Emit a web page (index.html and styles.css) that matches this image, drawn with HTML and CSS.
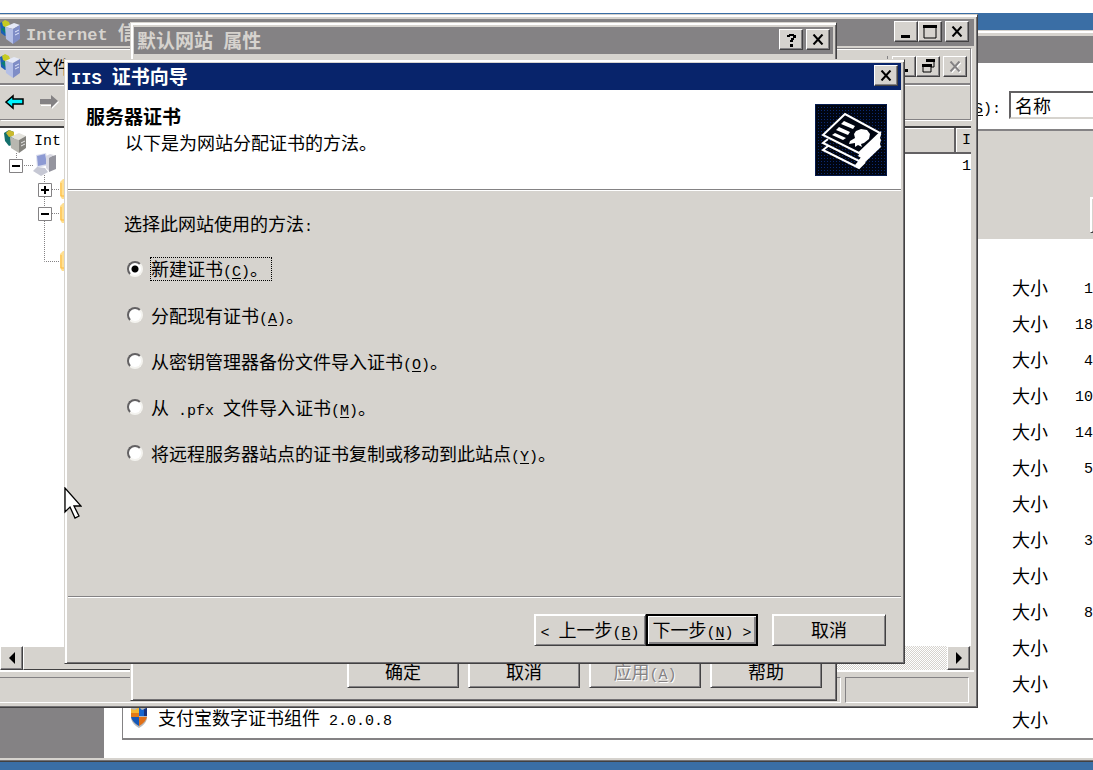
FILE: index.html
```
<!DOCTYPE html>
<html lang="zh-CN">
<head>
	<meta charset="utf-8"/>
	<title>IIS 证书向导</title>
	<link rel="stylesheet" href="styles.css">
</head>
<body>
<svg class="defs" width="0" height="0">
	<symbol id="close" viewBox="0 0 12 11"><path d="M1.500 .5L10.500 10.500M10.500 .5L1.500 10.500" fill="none" stroke="currentColor" stroke-width="2"/></symbol>
	<symbol id="server" viewBox="0 0 22 24">
		<path d="M0 3l4-2 5 3v11l-4 1-4-3z" fill="#1b5fb5"/><path d="M2 2l3-2 4 2 1 3-3 3-4-2z" fill="#c6cb20"/><path d="M1 9l4-2 3 4-2 3z" fill="#0c7f72"/>
		<path d="M5 7l9-4 6 2-7 4z" fill="#e5e9f7"/><path d="M5 7l8 2v15l-7-5z" fill="#b4bfe6"/><path d="M13 9l7-4v14l-7 5z" fill="#7f8dc6"/><path d="M15 12l4-2M15 15l4-2" stroke="#dfe5fa"/>
	</symbol>
	<symbol id="server-grey" viewBox="0 0 24 24">
		<path d="M1 4l5-3 5 2v12l-5 2-4-5z" fill="#14706c"/><path d="M3 4l3-3 5 2v4l-5 1z" fill="#c9b92e"/>
		<path d="M7 8l9-4 7 3-7 4z" fill="#e3e2dc"/><path d="M7 8l9 3v13l-8-5z" fill="#b8b7b0"/><path d="M16 11l7-4v12l-7 5z" fill="#84837e"/><path d="M18 14l4-2M18 17l4-2" stroke="#e8e8e8"/>
	</symbol>
</svg>

<div class="desktop">
	<!-- add/remove programs -->
	<section class="window programs">
		<div class="titlebar inactive"></div>
		<div class="programs-main">
			<div class="sidebar"></div>
			<div class="programs-page">
				<div class="sortbar">
					<label for="sort">排序方式<span class="en">(<u>S</u>):</span></label>
					<select id="sort"><option>名称</option></select>
				</div>
				<div class="listbox">
					<div class="current"><button class="btn" aria-label="更改"></button></div>
					<table class="apps">
						<tr><td></td><td class="size">大小</td><td class="num">1</td></tr>
						<tr><td></td><td class="size">大小</td><td class="num">18</td></tr>
						<tr><td></td><td class="size">大小</td><td class="num">4</td></tr>
						<tr><td></td><td class="size">大小</td><td class="num">10</td></tr>
						<tr><td></td><td class="size">大小</td><td class="num">14</td></tr>
						<tr><td></td><td class="size">大小</td><td class="num">5</td></tr>
						<tr><td></td><td class="size">大小</td><td class="num"></td></tr>
						<tr><td></td><td class="size">大小</td><td class="num">3</td></tr>
						<tr><td></td><td class="size">大小</td><td class="num"></td></tr>
						<tr><td></td><td class="size">大小</td><td class="num">8</td></tr>
						<tr><td></td><td class="size">大小</td><td class="num"></td></tr>
						<tr><td></td><td class="size">大小</td><td class="num"></td></tr>
						<tr>
							<td><div class="app">
								<svg width="18" height="22" viewBox="0 0 18 22"><path d="M9 0l3 2 5-1v12q-2 6-8 9Q3 19 1 13V1l5 1z" fill="#b9b9b9"/><path d="M9 1v9H1V3l4 1z" fill="#f2b632"/><path d="M1 7h8v4H1z" fill="#e27a16"/><path d="M9 1l3 3 5-2v8H9z" fill="#1766cf"/><path d="M14 3l3-1v8h-3z" fill="#17317c"/><path d="M1 11h8v9q-6-3-8-9z" fill="#1558b7"/><path d="M17 11q-2 6-8 9v-9z" fill="#e06f17"/></svg>
								<span>支付宝数字证书组件<span class="en"> 2.0.0.8</span></span></div></td>
							<td class="size">大小</td><td class="num"></td>
						</tr>
					</table>
				</div>
			</div>
		</div>
	</section>

	<!-- IIS manager -->
	<section class="window manager">
		<div class="titlebar inactive">
			<svg width="22" height="24"><use href="#server"/></svg>
			<h2><span class="en">Internet </span>信</h2>
			<div class="controls">
				<button class="ctl" aria-label="最小化"><svg width="12" height="12"><path d="M1 9h9v3H1z"/></svg></button>
				<button class="ctl" aria-label="最大化"><svg width="14" height="14"><path d="M1 2h12v11H1z" fill="none" stroke="#000"/><path d="M0 0h14v3H0z"/></svg></button>
				<button class="ctl apart" aria-label="关闭"><svg width="12" height="11"><use href="#close"/></svg></button>
			</div>
		</div>
		<div class="menubar">
			<svg width="22" height="24"><use href="#server"/></svg>
			<a href="#">文件</a>
			<div class="controls mdi">
				<button class="ctl" aria-label="最小化"><svg width="12" height="12"><path d="M1 9h9v3H1z"/></svg></button>
				<button class="ctl" aria-label="还原"><svg width="13" height="14"><path d="M4 1h8v7H9M1 6h8v7H1z" fill="none" stroke="#000"/><path d="M4 0h9v3H4zM0 5h10v3H0z"/></svg></button>
				<button class="ctl apart off" aria-label="关闭" disabled><svg width="12" height="11"><use href="#close"/></svg></button>
			</div>
		</div>
		<div class="toolbar">
			<button aria-label="后退"><svg width="20" height="16"><path d="M1 8l7-6v3h10v5H8v4z" fill="#00f3ff" stroke="#000" stroke-width="1.5"/></svg></button>
			<button aria-label="前进"><svg width="20" height="16"><path d="M20 8l-7 7v-3H2v-1h11l6-4z" fill="#fff"/><path d="M19 7l-7-6v4H1v5h11v4z" fill="#848284"/></svg></button>
		</div>
		<div class="panes">
			<div class="tree">
				<div><svg width="30" height="24"><use href="#server-grey" x="3" width="24" height="24"/></svg><span class="en">Int</span></div>
				<svg width="66" height="24"><path d="M16.5 0v5M24 12.500h9M44.500 22v2" stroke="#848284" stroke-dasharray="1 1"/><path d="M9.500 6.500h13v13h-13z" fill="#fff" stroke="#848284"/><path d="M12 12h8v2h-8z"/><path d="M36 2l10-2 3 12-12 3z" fill="#d9dded"/><path d="M37 3l8-2 2 10-9 2z" fill="#8d9ad3"/><path d="M49 4l7-2v14l-7 3z" fill="#94949e"/><path d="M46 3l4-2 4 1-5 3v13l-3-3z" fill="#d8d8e2"/><path d="M33 18l4-4 8 1 3 4-7 4z" fill="#c6c8d4"/></svg>
				<svg width="66" height="24"><path d="M44.500 0v24M52 12.500h9" stroke="#848284" stroke-dasharray="1 1"/><path d="M38.500 6.500h13v13h-13z" fill="#fff" stroke="#848284"/><path d="M41 12h8v2h-8zM44 9h2v8h-2z"/><path d="M60 5l3-3h3v20h-4l-2-3z" fill="#ffdf91"/><path d="M61 6v13h4" stroke="#ffba3d" fill="none"/></svg>
				<svg width="66" height="24"><path d="M44.500 0v24M52 12.500h9" stroke="#848284" stroke-dasharray="1 1"/><path d="M38.500 6.500h13v13h-13z" fill="#fff" stroke="#848284"/><path d="M41 12h8v2h-8z"/><path d="M60 5l3-3h3v20h-4l-2-3z" fill="#ffdf91"/><path d="M61 6v13h4" stroke="#ffba3d" fill="none"/></svg>
				<svg width="66" height="24"><path d="M44.500 0v24" stroke="#848284" stroke-dasharray="1 1"/></svg>
				<svg width="66" height="24"><path d="M44.500 0v12.500h16" fill="none" stroke="#848284" stroke-dasharray="1 1"/><path d="M60 5l3-3h3v20h-4l-2-3z" fill="#ffdf91"/><path d="M61 6v13h4" stroke="#ffba3d" fill="none"/></svg>
			</div>
			<table class="sites">
				<tr><th></th><th class="ip">I</th></tr>
				<tr><td></td><td class="ip">1</td></tr>
			</table>
		</div>
		<div class="scrollbar">
			<button class="ctl" aria-label="向左"><svg width="8" height="12"><path d="M7 0v12L1 6z"/></svg></button>
			<div class="thumb"></div>
			<div class="track"></div>
			<button class="ctl" aria-label="向右"><svg width="8" height="12"><path d="M1 0v12l6-6z"/></svg></button>
		</div>
		<div class="statusbar"><span></span><span></span></div>
	</section>

	<!-- site properties -->
	<section class="window properties">
		<div class="titlebar inactive">
			<h2>默认网站<span class="en"> </span>属性</h2>
			<div class="controls">
				<button class="ctl" aria-label="帮助"><svg width="12" height="14"><path d="M2 4V2h2V1h5v1h2v3H9v2H8v2H5V7h1V5h2V3H5v1zM5 11h3v3H5z"/></svg></button>
				<button class="ctl apart" aria-label="关闭"><svg width="12" height="11"><use href="#close"/></svg></button>
			</div>
		</div>
		<div class="prop-buttons">
			<button class="btn">确定</button>
			<button class="btn">取消</button>
			<button class="btn" disabled>应用<span class="en">(<u>A</u>)</span></button>
			<button class="btn">帮助</button>
		</div>
	</section>

	<!-- wizard -->
	<form class="window wizard">
		<div class="titlebar">
			<h1><span class="en">IIS </span>证书向导</h1>
			<div class="controls"><button type="button" class="ctl" aria-label="关闭"><svg width="12" height="11"><use href="#close"/></svg></button></div>
		</div>
		<div class="wizard-head">
			<div>
				<h2>服务器证书</h2>
				<p>以下是为网站分配证书的方法。</p>
			</div>
			<svg width="72" height="72" viewBox="0 0 72 72">
				<defs><pattern id="mesh" width="3" height="3" patternUnits="userSpaceOnUse"><path d="M0 0h3v3H0z" fill="#000511"/><path d="M0 0h1v1H0z" fill="#0b2a72"/></pattern></defs>
				<path d="M0 0h72v72H0z" fill="url(#mesh)"/><path d="M.5.5h71v71H.5z" fill="none" stroke="#061c50"/>
				<path d="M66 27v4l-1 3 1 2-1 4 1 3-22 21-4-3 6-7-3-2 3-5z" fill="#fff"/>
				<g fill="none" stroke="#fff" stroke-width="2"><path d="M30 10L8 31l36 18 21-20z" fill="#000511"/><path d="M13 35l-5 4 36 18 6-6M13 42l-5 4 36 18 6-6"/></g>
				<path d="M26 20l3-3 11 5-2 3zM21 26l3-3 11 5-2 3zM17 31l3-2 11 5-3 2z" fill="#fff"/>
				<path d="M39 30l2-3 5-2 6 1 3 4-1 5-5 4-3 1 1 3-4-2-3 2v-4l-6 1 1-3 5-3z" fill="#fff"/>
			</svg>
		</div>
		<fieldset class="wizard-body">
			<legend>选择此网站使用的方法<span class="en">:</span></legend>
			<label><input type="radio" name="method" checked><span class="focused">新建证书<span class="en">(<u>C</u>)</span>。</span></label>
			<label><input type="radio" name="method"><span>分配现有证书<span class="en">(<u>A</u>)</span>。</span></label>
			<label><input type="radio" name="method"><span>从密钥管理器备份文件导入证书<span class="en">(<u>O</u>)</span>。</span></label>
			<label><input type="radio" name="method"><span>从<span class="en"> .pfx </span>文件导入证书<span class="en">(<u>M</u>)</span>。</span></label>
			<label><input type="radio" name="method"><span>将远程服务器站点的证书复制或移动到此站点<span class="en">(<u>Y</u>)</span>。</span></label>
		</fieldset>
		<div class="wizard-foot">
			<button type="button" class="btn"><span class="en">&lt; </span>上一步<span class="en">(<u>B</u>)</span></button>
			<button type="button" class="btn default">下一步<span class="en">(<u>N</u>) &gt;</span></button>
			<button type="button" class="btn cancel">取消</button>
		</div>
	</form>

	<svg class="pointer" width="18" height="32" viewBox="0 0 18 32"><path d="M1 1v24l5-5 5 11 4-2-5-10h7z" fill="#fff" stroke="#000" stroke-width="1.300"/></svg>
</div>
</body>
</html>
```

FILE: styles.css
```
*{
	box-sizing: border-box;
}
body{
	margin: 0;
	background: #fff;
	color: #000;
	font: 18px/24px "Noto Sans CJK SC", sans-serif;
}
button, select{
	font: inherit;
	color: inherit;
	padding: 0;
}
h1, h2, p{
	margin: 0;
	font-size: 18px;
	white-space: nowrap;
}
h1, h2{
	font-size: 19px;
}
p{
	font-weight: normal;
}
svg{
	display: block;
	flex: none;
}
.defs{
	position: absolute;
}
.en{
	font-family: "Liberation Mono", monospace;
	font-size: 15px;
	line-height: 1;
	white-space: pre;
}
h1 .en, h2 .en{
	font-size: 17px;
}
u{
	text-underline-offset: 2px;
}

.desktop{
	position: relative;
	height: 100vh;
	overflow: hidden;
	border-top: 13px solid #fff;
	background: #3a6ea5;
}

/* windows */
.window{
	position: absolute;
	display: flex;
	flex-direction: column;
	padding: 3px;
	background: #d6d3ce;
	border: 1px solid;
	border-color: #d6d3ce #424142 #424142 #d6d3ce;
	box-shadow: inset 2px 2px #fff, inset -1px -1px #737173;
}
.programs{
	top: 17px;
	left: -4px;
	right: -30px;
	bottom: 8px;
}
.manager{
	top: 1px;
	left: -4px;
	right: 115px;
	bottom: 62px;
}
.properties{
	top: 9px;
	left: 130px;
	right: 256px;
	bottom: 69px;
}
.wizard{
	top: 46px;
	left: 64px;
	right: 188px;
	bottom: 106px;
}
.titlebar{
	display: flex;
	align-items: center;
	flex: none;
	height: 27px;
	padding: 0 3px 2px;
	background: #08246b;
	color: #fff;
}
.titlebar.inactive{
	background: #848284;
	color: #d6d3ce;
}
.controls{
	display: flex;
	margin-left: auto;
}
.ctl{
	display: flex;
	align-items: center;
	justify-content: center;
	width: 24px;
	height: 21px;
	background: #d6d3ce;
	border: 1px solid;
	border-color: #fff #424142 #424142 #fff;
	box-shadow: inset -1px -1px #848284;
	color: #000;
}
.ctl.apart{
	margin-left: 3px;
}
.ctl.off{
	color: #848284;
}
.off svg{
	filter: drop-shadow(1px 1px #fff);
}
.btn{
	width: 112px;
	height: 32px;
	padding-bottom: 3px;
	background: #d6d3ce;
	border: 1px solid;
	border-color: #fff #424142 #424142 #fff;
	box-shadow: inset 1px 1px #fff, inset -1px -1px #848284;
	white-space: nowrap;
}
.btn:disabled{
	color: #848284;
	text-shadow: 1px 1px #fff;
}
.btn.default{
	border: 2px solid #000;
	box-shadow: inset 1px 1px #fff, inset -2px -2px #848284;
}

/* add/remove programs */
.programs .titlebar{
	margin-top: 2px;
}
.programs-main{
	display: flex;
	flex: 1;
	min-height: 0;
	background: #fff;
}
.sidebar{
	width: 104px;
	background: #848284;
}
.programs-page{
	display: flex;
	flex-direction: column;
	flex: 1;
	padding: 28px 0 18px 18px;
}
.sortbar{
	display: flex;
	align-items: center;
	justify-content: flex-end;
	gap: 8px;
	margin-bottom: 10px;
}
#sort{
	width: 110px;
	height: 28px;
	padding-left: 4px;
	appearance: none;
	background: #fff;
	border: 2px solid;
	border-color: #636163 #d6d3ce #d6d3ce #636163;
	border-radius: 0;
}
.listbox{
	flex: 1;
	border: 1px solid #848284;
	border-width: 2px 1px;
}
.current{
	display: flex;
	justify-content: flex-end;
	align-items: flex-end;
	height: 108px;
	padding: 0 2px 6px;
	background: #d6d3ce;
}
.current .btn{
	width: 26px;
	height: 36px;
}
.apps{
	width: 100%;
	margin-top: 28px;
	border-collapse: collapse;
}
.apps td{
	height: 36px;
	padding: 4px 0 0;
}
.apps .size{
	width: 60px;
}
.apps .num{
	width: 46px;
	padding: 10px 25px 0 0;
	text-align: right;
	font: 15px/24px "Liberation Mono", monospace;
}
.app{
	display: flex;
	align-items: center;
	gap: 10px;
	padding: 0 0 4px 7px;
}

/* IIS manager */
.manager .titlebar{
	margin-top: 1px;
	padding-left: 0;
	padding-right: 5px;
}
.titlebar svg + h2, .menubar svg + a{
	margin-left: 4px;
}
.menubar, .toolbar{
	display: flex;
	align-items: center;
	flex: none;
	height: 36px;
	margin-right: 3px;
	border: 1px solid #848284;
	border-width: 1px 1px 1px 0;
	box-shadow: inset 0 1px #fff, 1px 1px #fff;
}
.menubar{
	margin-top: 2px;
	padding-right: 3px;
}
.menubar a{
	padding-left: 9px;
	color: #000;
	text-decoration: none;
}
.mdi{
	padding-left: 4px;
	border-left: 1px solid #848284;
}
.toolbar{
	gap: 14px;
	padding-left: 5px;
}
.toolbar button{
	background: none;
	border: 0;
}
.panes{
	display: flex;
	flex: 1;
	min-height: 0;
	margin: 6px 3px 0 0;
	background: #fff;
	border-top: 2px solid #424142;
	overflow: hidden;
}
.tree{
	flex: 1;
	padding-top: 1px;
}
.tree div{
	display: flex;
	align-items: center;
	gap: 4px;
}
.sites{
	align-self: flex-start;
	border-collapse: collapse;
}
.sites th{
	width: 150px;
	height: 24px;
	padding: 0;
	background: #d6d3ce;
	border: 1px solid #636163;
	border-width: 0 2px 2px 0;
	box-shadow: inset 1px 1px #fff;
	font-weight: normal;
}
.sites .ip{
	width: 16px;
	padding: 2px 0 0;
	border-right: 0;
	text-align: right;
	font: 15px/22px "Liberation Mono", monospace;
}
.scrollbar{
	display: flex;
	flex: none;
	height: 24px;
	margin-right: 4px;
}
.scrollbar .ctl{
	width: 23px;
	height: 24px;
}
.thumb{
	width: 380px;
	background: #d6d3ce;
	border: 1px solid;
	border-color: #fff #424142 #424142 #fff;
}
.track{
	flex: 1;
	background: repeating-conic-gradient(#fff 0 25%, #d6d3ce 0 50%) 0 0 / 2px 2px;
}
.statusbar{
	display: flex;
	flex: none;
	gap: 4px;
	height: 34px;
	padding: 5px 5px 1px 0;
	border-top: 2px solid #fff;
}
.statusbar span{
	flex: 1;
	border: 1px solid;
	border-color: #848284 #fff #fff #848284;
}
.statusbar span:first-child{
	border-left: 0;
}
.statusbar span:last-child{
	flex: none;
	width: 124px;
}

/* site properties */
.properties{
	justify-content: space-between;
}
.properties .titlebar{
	margin-top: 1px;
}
.prop-buttons{
	display: flex;
	justify-content: flex-end;
	gap: 9px;
	padding: 0 11px 9px;
}

/* wizard */
.wizard-head{
	display: flex;
	justify-content: space-between;
	flex: none;
	padding: 14px 14px 13px 18px;
	background: #fff;
	border-bottom: 1px solid #848284;
}
.wizard-head p{
	padding: 2px 0 0 39px;
}
.wizard-body{
	display: flex;
	flex-direction: column;
	gap: 22px;
	flex: 1;
	margin: 0;
	padding: 20px 56px;
	border: 0;
	border-top: 1px solid #fff;
}
.wizard-body legend{
	float: left;
	padding: 0;
}
.wizard-body label{
	display: flex;
	align-items: center;
	gap: 8px;
	height: 24px;
	padding-left: 3px;
	white-space: nowrap;
}
.wizard-body input{
	appearance: none;
	width: 16px;
	height: 16px;
	margin: 0;
	background: #fff;
	border: 2px solid;
	border-color: #636163 #f4f3ef #f4f3ef #636163;
	border-radius: 50%;
}
.wizard-body input:checked{
	background: radial-gradient(circle, #000 3px, #fff 4px);
}
.focused{
	padding-right: 3px;
	line-height: 20px;
	outline: 1px dotted #000;
}
.wizard-foot{
	display: flex;
	justify-content: flex-end;
	flex: none;
	padding: 17px 15px 14px;
	border-top: 1px solid #848284;
	box-shadow: inset 0 1px #fff;
}
.wizard-foot .cancel{
	width: 114px;
	margin-left: 14px;
}

.pointer{
	position: absolute;
	left: 64px;
	top: 474px;
}
```
